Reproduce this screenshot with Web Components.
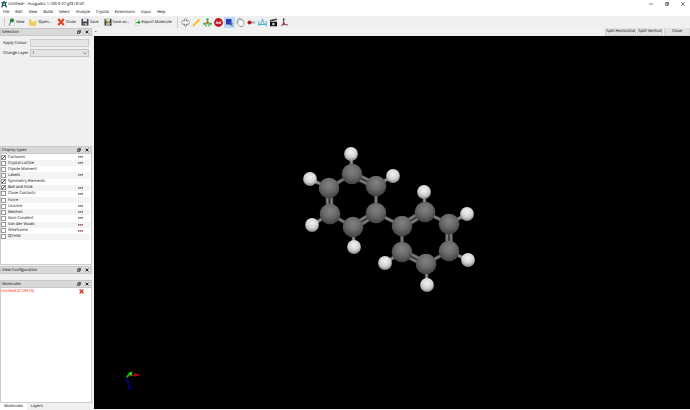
<!DOCTYPE html>
<html lang="en">
<head>
<meta charset="utf-8">
<title>Avogadro</title>
<style>
html,body{margin:0;height:100%}
body{font:4px/7px "Open Sans","Noto Sans",sans-serif;color:#000;background:#f0f0f0;text-rendering:geometricPrecision}
</style>
</head>
<body>
<avo-window></avo-window>
<script>
const base = `*{box-sizing:border-box}button{font:inherit;color:inherit;background:none;border:0;padding:0;margin:0;white-space:nowrap;text-rendering:inherit}svg{display:block;flex:none}`;
function define(name, css, html) {
  customElements.define(name, class extends HTMLElement {
    connectedCallback() {
      if (this.shadowRoot) return;
      const root = this.attachShadow({mode: 'open'});
      root.innerHTML = `<style>${base}${css}</style>` + (typeof html === 'function' ? html(this) : html);
    }
  });
}
const svg = (w, h, body) => `<svg width="${w}" height="${h}" viewBox="0 0 ${w} ${h}" aria-hidden="true">${body}</svg>`;
const icons = {
  new: svg(8,8,`<path d="M3 .5h3l1.500 1.500v5.500h-4.500z" fill="#fff" stroke="#bbb" stroke-width=".5"/><circle cx="5" cy="2.500" r="2" fill="#188a32"/><path d="M4 3.500l-2 4" stroke="#2b7b3c" stroke-width=".9"/>`),
  open: svg(8,8,`<path d="M.5 1.500h2.500l.7 1h3v5h-6.200z" fill="#d9b036"/><path d="M2 .8h4v3h-4z" fill="#f4f4e8"/><path d="M.5 7.500l.7-3.700h6.500l-.8 3.700z" fill="#f0ce55"/>`),
  close: svg(8,8,`<path d="M1.200 1l5.600 6M6.800 1l-5.600 6" stroke="#e24425" stroke-width="2.200"/>`),
  save: svg(8,8,`<path d="M.5.8h7v6.700h-7z" fill="#3b4248"/><path d="M2 .8h4v2.700H2z" fill="#e0e7ee"/><path d="M2 5h4v2.500H2z" fill="#a9b2ba"/><path d="M2.500 5.300h1v2h-1z" fill="#30363b"/>`),
  saveas: svg(8,8,`<path d="M.5.8h7v6.700h-7z" fill="#3b4248"/><path d="M2 .8h4v2.700H2z" fill="#c8dcef"/><path d="M2 5h4v2.500H2z" fill="#a9b2ba"/><path d="M1.500 1.500l5 5" stroke="#e8bd35" stroke-width="1.300"/><path d="M6 6l1.300 1.300" stroke="#222"/>`),
  export: svg(6,8,`<path d="M.5 1h3.500v6.500H.5z" fill="#fff" stroke="#bbb" stroke-width=".5"/><path d="M.5 6Q.7 3.700 3 3.700V2.200L5.800 4.300 3 6.300V5Q1.300 4.900.5 6z" fill="#249a37"/>`),
  navigate: svg(9,9,`<path d="M4.500.3L6 2H5.300v1H7V2.500L8.800 4.500 7 6.500V6H5.300v1H6L4.500 8.700 3 7h.7V6H2v.5L.2 4.500 2 2.500V3h1.700V2H3z" fill="#fff" stroke="#555" stroke-width=".6"/>`),
  draw: svg(9,9,`<path d="M1.500 7.500l6-6" stroke="#f5c51c" stroke-width="1.800"/><path d="M.7 8.300l.5-1.500 1 1z" fill="#997447"/>`),
  template: svg(9,9,`<path d="M4.500 4.500V1.700M4.500 4.500L1.500 6M4.500 4.500L7.500 6M4.500 4.500L3 7.700M4.500 4.500L6 7.700" stroke="#50a650" stroke-width=".7"/><g fill="#22b52c"><circle cx="4.500" cy="1.500" r="1.200"/><circle cx="1.400" cy="5.800" r="1.200"/><circle cx="7.600" cy="5.800" r="1.200"/><circle cx="3" cy="7.700" r=".8"/><circle cx="6" cy="7.700" r=".8"/></g><circle cx="4.500" cy="4.500" r="1.300" fill="#e14632"/>`),
  label: svg(9,9,`<circle cx="4.500" cy="4.500" r="4.400" fill="#c01820"/><text x="4.500" y="6" text-anchor="middle" font-size="4" font-weight="bold" fill="#fff">Ad</text>`),
  select: svg(9,9,`<path d="M1 1h5.500v5.500H1z" fill="#3036b8"/><path d="M4.500 4.300l3.700 1.500-1.500.5 1.400 1.500-.7.7L6 7l-.6 1.300z" fill="#4e637d"/>`),
  hand: svg(9,9,`<path d="M1 2.200l1.200-.7.800 1-.2-1.700 1.100-.3.700 1.400.4-1.100 1 .4.200 1.500.7-.4.700.8.300 3-1.500 2.400H4L1.800 6 .6 4.500l.9-.5 1 .8z" fill="#fff" stroke="#666" stroke-width=".6"/>`),
  bond: svg(9,9,`<path d="M3 4.500h4" stroke="#777" stroke-width="1.500"/><circle cx="2.500" cy="4.500" r="2" fill="#c51c1c"/><circle cx="7" cy="4.500" r="1.500" fill="#aac6d6"/>`),
  measure: svg(9,9,`<path d="M.7 3v5M8.300 3v5M.7 6.500h7.600M2.500 6L4.500 2l2 4" fill="none" stroke="#3cabc9" stroke-width=".9"/><circle cx="4.500" cy="1.700" r=".9" fill="#67bfd4"/>`),
  movie: svg(9,9,`<path d="M1 3.700h7v4.600H1zM.8 2L7.700.5l.3 1.400L1.100 3.400z" fill="#111"/><path d="M2 3l1-1.800M4.300 2.600l1-1.800M6.600 2l.8-1.600M3.700 5l2.300 1-2.300 1.200z" stroke="#fff" stroke-width=".4" fill="#fff"/>`),
  axes: svg(9,9,`<path d="M3.700.5v5.700" stroke="#222" stroke-width=".9"/><path d="M2.700 1.700l1-1.500 1 1.500" fill="#222"/><path d="M3.700 6.200l4.300.8M3.700 6.200L1 7.700" stroke="#333" stroke-width=".8"/><circle cx="3.700" cy="6" r="1.200" fill="#c61e1e"/>`)
};

define('avo-icon', `:host{display:block}`, el => icons[el.getAttribute('name')]);

define('avo-titlebar', `:host{display:flex;align-items:center;height:8px;background:#fff;padding:0 5px 0 1px;gap:1px}
.t{flex:1;white-space:nowrap}.w{display:flex;gap:12px}.w button{display:block}`,
`${svg(6,7,`<path d="M.7 6.500L2.700.8h.8l2 5.700M1.500 4.500h3M.5 1l1.200 2M5.500 1L4.300 3" fill="none" stroke="#1d4e63" stroke-width="1.200"/>`)}
<span class="t">Untitled• - Avogadro 1.100.0-27-gf3131df</span>
<span class="w"><button aria-label="Minimize">${svg(4,4,`<path d="M0 2h4" stroke="#333" stroke-width=".6"/>`)}</button><button aria-label="Restore">${svg(4,4,`<path d="M.3 1.200h2.500v2.500H.3zM1.200 1.200V.3h2.500v2.500h-.9" fill="none" stroke="#222" stroke-width=".6"/>`)}</button><button aria-label="Close window">${svg(4,4,`<path d="M.2.2l3.600 3.600M3.800.2L.2 3.800" stroke="#222" stroke-width=".6"/>`)}</button></span>`);

define('avo-menubar', `:host{display:flex;align-items:center;height:8px;background:#fff;padding:0 3px;gap:6px}`,
['File','Edit','View','Build','Select','Analyze','Crystal','Extensions','Input','Help'].map(m => `<button>${m}</button>`).join(''));

define('avo-toolbar', `:host{display:flex;align-items:center;height:12px;background:#f0f0f0;padding-left:4px}
.a{display:flex;gap:5px;padding:0 5px 0 2px;border-left:1px solid #ccc}.a button{display:flex;align-items:center;gap:1px}
.b{display:flex;border-left:1px solid #ccc;padding-left:2px}.b button{width:11px;height:11px;padding:1px}.b button[aria-pressed=true]{background:#b9dcf4}`,
`<div class="a">${[['new','New'],['open','Open...'],['close','Close'],['save','Save'],['saveas','Save as...'],['export','Export Molecule']].map(([i,t]) => `<button><avo-icon name="${i}"></avo-icon>${t}</button>`).join('')}</div>
<div class="b">${['navigate','draw','template','label','select','hand','bond','measure','movie','axes'].map(i => `<button aria-label="${i}" aria-pressed="${i === 'select'}"><avo-icon name="${i}"></avo-icon></button>`).join('')}</div>`);

define('avo-dock', `:host{display:flex;flex-direction:column;min-height:0}
header{display:flex;align-items:center;flex:none;height:8px;background:#d9d9d9;border:1px solid #c8c8c8;padding:0 2px 0 1px}
h2{flex:1;margin:0;font:inherit}header button+button{margin-left:4px}
.body{flex:1;min-height:0}`,
el => `<header><h2>${el.getAttribute('label')}</h2><button aria-label="Float">${svg(4,4,`<path d="M.4 1.500h2v2h-2zM1.500 1.500V.5h2v2H2.400" fill="none" stroke="#222" stroke-width=".7"/>`)}</button><button aria-label="Close panel">${svg(4,4,`<path d="M.6.6l2.800 2.800M3.400.6L.6 3.400" stroke="#111" stroke-width=".9"/>`)}</button></header><div class="body"><slot></slot></div>`);

define('avo-selection', `:host{display:grid;grid-template-columns:auto 1fr;align-items:center;gap:2px 2px;padding:3px 3px 0 3px}
label{white-space:nowrap}.c{height:8px;background:#e6e6e6;border:1px solid #ccc}
select{width:100%;height:8px;font:inherit;line-height:6px;color:#000;appearance:none;border:1px solid #c3c3c3;background:#e4e4e4;padding:0 1px;margin:0;border-radius:0}
.s{display:grid}.s>*{grid-area:1/1}.s svg{justify-self:end;align-self:center;margin-right:2px;pointer-events:none}`,
`<label for="c">Apply Colour</label><button id="c" class="c"></button><label for="l">Change Layer</label><span class="s"><select id="l"><option>1</option></select>${svg(4,3,`<path d="M.5.5L2 2 3.500.5" fill="none" stroke="#444" stroke-width=".6"/>`)}</span>`);

define('avo-types', `:host{display:block;height:100%;background:#fff;border:1px solid #ccc;border-top:0}
ul{list-style:none;margin:0;padding:0 1px 0 0;height:86px;display:flex;flex-direction:column}
li{flex:1;min-height:0;display:flex;align-items:center}li:nth-child(even){background:#f4f4f4}
label{flex:1;display:flex;align-items:center;gap:2px}
input{appearance:none;width:5px;height:5px;margin:0;border:1px solid #999;background:#fff;display:grid;place-items:center}
input:checked{background:linear-gradient(135deg,transparent 40%,#444 40% 60%,transparent 60%)}
li button{width:5px;height:6px;margin-right:7px;display:grid;place-items:center}`,
[['Cartoons',1,1],['Crystal Lattice',0,1],['Dipole Moment',0,0],['Labels',0,1],['Symmetry Elements',1,0],['Ball and Stick',1,1],['Close Contacts',0,1],['Force',0,0],['Licorice',0,1],['Meshes',0,1],['Non-Covalent',0,1],['Van der Waals',0,1],['Wireframe',0,1],['QTAIM',0,0]]
.reduce((s,[t,c,d]) => s + `<li><label><input type="checkbox"${c ? ' checked' : ''}>${t}</label>${d ? `<button aria-label="${t} options">${svg(5,2,`<path d="M0 .3h1.400v1.200H0zM1.800.3h1.400v1.200H1.800zM3.600.3H5v1.200H3.600z" fill="#7b4034"/>`)}</button>` : ''}</li>`, '<ul>') + '</ul>');

define('avo-molecules', `:host{display:block;height:100%;background:#fff;border:1px solid #ccc;border-top:0}
.r{display:flex;align-items:center;height:7px;color:#f00}.r span{flex:1}.r button{margin-right:7px}`,
`<div class="r"><span>Untitled (C12H10)</span><button aria-label="Remove molecule">${svg(5,5,`<path d="M.6.6l3.800 3.800M4.400.6L.6 4.400" stroke="#d33a20" stroke-width="1.400"/>`)}</button></div>`);

define('avo-tabs', `:host{display:flex;flex:none;height:7px;background:#f0f0f0}button{padding:0 4px}button[aria-selected=true]{background:#fff}`,
`<button role="tab" aria-selected="true">Molecules</button><button role="tab" aria-selected="false">Layers</button>`);

define('avo-view', `:host{display:flex;flex-direction:column;min-width:0;background:#f0f0f0}
.bar{display:flex;height:8px;padding-left:1px;gap:1px;align-items:center;background:#f2f2f2}.bar span{flex:1}
.bar button{height:8px;background:#e2e2e2;border:1px solid #d2d2d2;border-top-color:#e8e8e8;border-width:0 1px 1px;min-width:26px}
.stage{flex:1;min-height:0;background:#000;margin-bottom:1px;display:flex}.stage svg{width:100%;height:100%}`,
() => {
  const C = [[352,174],[329,188],[330,214],[353,227],[376,213],[376,186],[402,226],[425,212],[449,224],[449,251],[426,264],[402,252]];
  const H = [[351,154,0],[310,179,1],[312,225,2],[354,247,3],[393,176,5],[424,192,7],[467,214,8],[468,260,9],[427,285,10],[385,263,11]];
  const bonds = [[0,1,1],[1,2,2],[2,3,1],[3,4,2],[4,5,1],[5,0,2],[4,6,1],[6,7,2],[7,8,1],[8,9,2],[9,10,1],[10,11,2],[11,6,1]];
  const line = (a,b,o,c,l) => {
    const dx = b[0]-a[0], dy = b[1]-a[1], n = Math.hypot(dx,dy), x = -dy/n*o, y = dx/n*o;
    const d = `M${a[0]+x} ${a[1]+y}L${b[0]+x} ${b[1]+y}`;
    return `<path d="${d}" stroke="${c}" stroke-width="3.400"/><path d="${d}" stroke="${l}" stroke-width="1.400"/>`;
  };
  let s = '';
  for (const [a,b,k] of bonds) for (const o of k === 2 ? [-2,2] : [0]) s += line(C[a],C[b],o,'#5c5c5c','#808080');
  for (const h of H) {
    const c = C[h[2]], m = [(c[0]+h[0]*2)/3, (c[1]+h[1]*2)/3];
    s += line(c,m,0,'#6c6c6c','#909090') + line(m,h,0,'#a8a8a8','#d0d0d0');
  }
  for (const [x,y] of C) s += `<circle cx="${x}" cy="${y}" r="10.300" fill="url(#c)"/>`;
  for (const [x,y] of H) s += `<circle cx="${x}" cy="${y}" r="6.900" fill="url(#h)"/>`;
  return `<div class="bar"><span>•</span><button>Split Horizontal</button><button>Split Vertical</button><button>Close</button></div>
<div class="stage"><svg viewBox="94 36 596 373" role="img" aria-label="Biphenyl molecule"><defs>
<radialGradient id="c" cx=".5" cy=".35" r=".65"><stop offset="0" stop-color="#828282"/><stop offset=".5" stop-color="#6a6a6a"/><stop offset="1" stop-color="#404040"/></radialGradient>
<radialGradient id="h" cx=".5" cy=".35" r=".65"><stop offset="0" stop-color="#f4f4f4"/><stop offset=".6" stop-color="#d2d2d2"/><stop offset="1" stop-color="#868686"/></radialGradient></defs>${s}
<path d="M127 376l8-1" stroke="#8e0808" stroke-width="1.500"/><path d="M134 373l7 1.700-6.500 2z" fill="#a50b0b"/>
<path d="M127 377l2 10" stroke="#00008c" stroke-width="1.500"/><path d="M127.300 386.500l4-.7-1.200 5.500z" fill="#00007c"/>
<path d="M126.500 377l4-3.500" stroke="#0b0" stroke-width="1.800"/><path d="M128 373l4.500-1.500-1 4.500z" fill="#17e517"/></svg></div>`;
});

define('avo-window', `:host{display:flex;flex-direction:column;min-height:100vh}
main{flex:1;display:grid;grid-template-columns:92px minmax(0,1fr);column-gap:2px;min-height:0}
aside{display:flex;flex-direction:column;min-height:0}
.sel{flex:118 1 0}.typ{flex:119 1 0}.cfg{flex:none;margin-top:1px;height:14px}.mol{flex:123 1 0}`,
`<avo-titlebar></avo-titlebar><avo-menubar></avo-menubar><avo-toolbar></avo-toolbar>
<main><aside><avo-dock class="sel" label="Selection"><avo-selection></avo-selection></avo-dock>
<avo-dock class="typ" label="Display types"><avo-types></avo-types></avo-dock>
<avo-dock class="cfg" label="View Configuration"></avo-dock>
<avo-dock class="mol" label="Molecules"><avo-molecules></avo-molecules></avo-dock><avo-tabs></avo-tabs></aside>
<avo-view></avo-view></main>`);
</script>
</body>
</html>
